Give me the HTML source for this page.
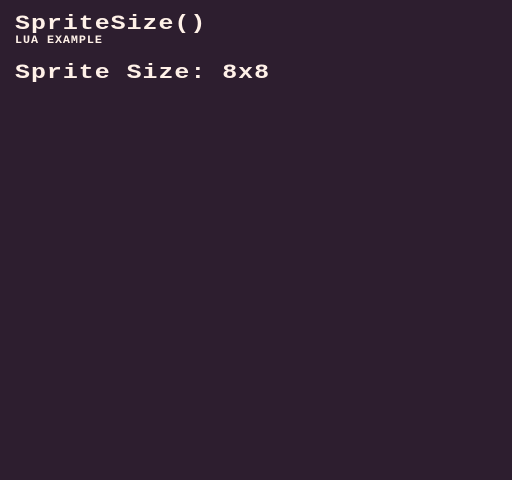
<!DOCTYPE html>
<html><head><style>
html,body{margin:0;padding:0;width:512px;height:480px;background:#2d1e2f;overflow:hidden}
div{position:absolute;color:#fff1e8;font-family:"Liberation Mono",monospace;font-weight:bold;white-space:pre;line-height:1;transform-origin:0 0}
.t{left:15px;top:15px;font-size:20px;letter-spacing:0.8px;transform:scaleX(1.245)}
.s{left:15px;top:36px;font-size:11px;letter-spacing:0.9px;text-transform:uppercase;transform:scaleX(1.065)}
.b{left:15px;top:64px;font-size:20px;letter-spacing:0.8px;transform:scaleX(1.245)}
</style></head><body>
<div class="t">SpriteSize()</div>
<div class="s">Lua Example</div>
<div class="b">Sprite Size: 8x8</div>
</body></html>
